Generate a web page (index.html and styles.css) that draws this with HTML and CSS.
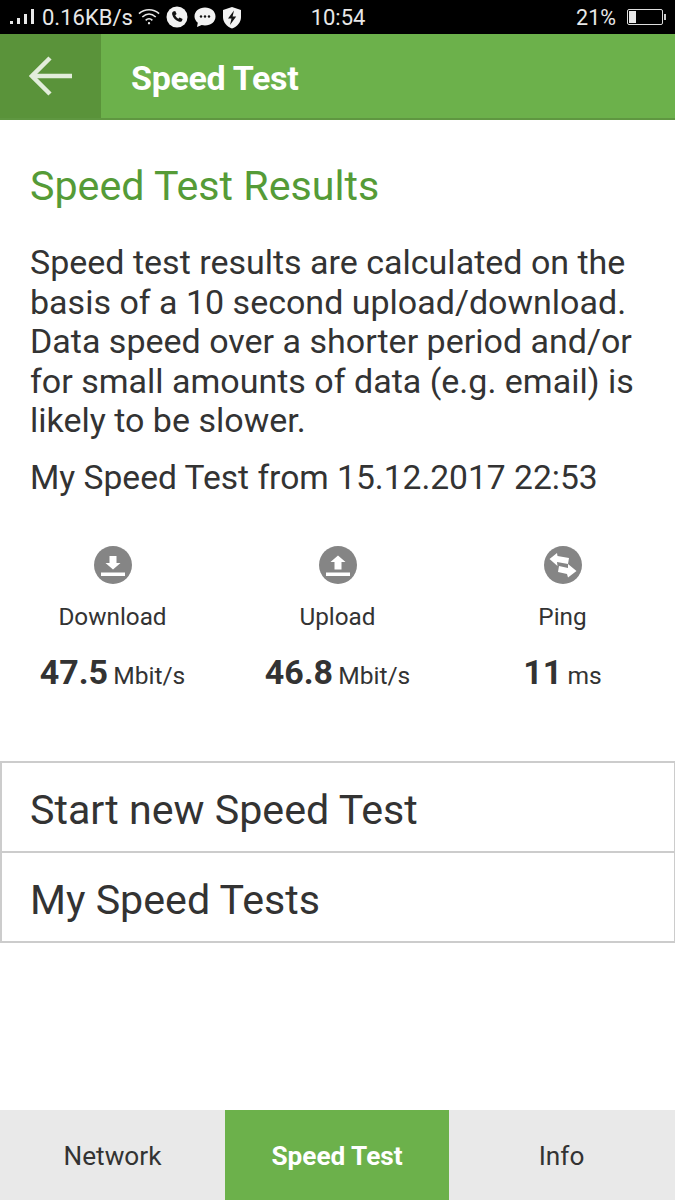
FILE: index.html
```html
<!DOCTYPE html>
<html lang="en">

<head>
    <meta charset="UTF-8">
    <title>Speed Test</title>
    <link rel="stylesheet" href="styles.css">
</head>

<body>
    <div class="page">
        <div class="status">
            <div class="status-left">
                <svg class="signal" width="24" height="16" viewBox="0 0 24 16">
                    <rect x="0" y="12" width="3" height="3" fill="#e8e8e8" />
                    <rect x="7" y="9" width="3" height="6" fill="#e8e8e8" />
                    <rect x="14" y="5" width="3" height="10" fill="#e8e8e8" />
                    <rect x="21" y="0" width="3" height="15" fill="#e8e8e8" />
                </svg>
                <span class="speed">0.16KB/s</span>
                <svg class="wifi" width="23" height="20" viewBox="0 0 24 20" fill="none" stroke="#e8e8e8" stroke-width="1.7">
                    <path d="M1 6.5C7 1 16 1 22 6.5" />
                    <path d="M4.5 10C9 6 14 6 18.5 10" />
                    <path d="M8 13.5C10 11.5 13 11.5 15 13.5" />
                    <circle cx="11.5" cy="16.5" r="1.2" fill="#e8e8e8" stroke="none" />
                </svg>
                <svg class="badge" width="22" height="22" viewBox="0 0 22 22">
                    <circle cx="11" cy="11" r="10.5" fill="#f2f2f2" />
                    <path d="M7.2 5.5l2 -.6 1.4 3.2 -1.4 1.2c.7 1.5 1.7 2.6 3.1 3.4l1.3 -1.3 3 1.6 -.7 2c-.6.8 -1.7 1 -2.700.7 -3.700 -1.100 -6 -3.800 -7 -7.200 -.3 -1.200 .1 -2.400 1 -3z" fill="#111" />
                </svg>
                <svg class="badge" width="24" height="22" viewBox="0 0 24 22">
                    <path d="M12 1.5c6 0 10.500 3.800 10.500 9s-4.500 9 -10.500 9c-1.200 0 -2.300 -.2 -3.300 -.5l-4.700 2 .8 -4.200C2.800 15 1.500 12.900 1.500 10.500c0 -5.200 4.500 -9 10.500 -9z" fill="#f2f2f2" />
                    <circle cx="8" cy="10.500" r="1.200" fill="#111" />
                    <circle cx="12" cy="10.500" r="1.200" fill="#111" />
                    <circle cx="16" cy="10.500" r="1.200" fill="#111" />
                </svg>
                <svg class="badge" width="20" height="23" viewBox="0 0 20 23">
                    <path d="M10 1l9 3v7c0 5.500 -3.800 9.500 -9 11.500C4.800 20.500 1 16.500 1 11V4z" fill="#f2f2f2" />
                    <path d="M12 4.500L6 12.500h3.500L8 19l6.200 -8.500h-3.600z" fill="#111" />
                </svg>
            </div>
            <span class="clock">10:54</span>
            <div class="status-right">
                <span class="percent">21%</span>
                <div class="battery">
                    <div class="battery-fill"></div>
                </div>
                <div class="battery-tip"></div>
            </div>
        </div>

        <div class="header">
            <div class="back">
                <svg width="43" height="42" viewBox="0 0 43 42" fill="none" stroke="#e2eddb" stroke-width="4.500">
                    <path d="M21 3L3 21l18 18" />
                    <path d="M3 21h40" />
                </svg>
            </div>
            <div class="header-title">Speed Test</div>
        </div>

        <div class="content">
            <h1>Speed Test Results</h1>
            <p class="info">Speed test results are calculated on the basis of a 10 second upload/download. Data speed over a shorter period and/or for small amounts of data (e.g. email) is likely to be slower.</p>
            <p class="from">My Speed Test from 15.12.2017 22:53</p>
        </div>

        <div class="stats">
            <div class="stat">
                <svg width="38" height="38" viewBox="0 0 38 38">
                    <circle cx="19" cy="19" r="19" fill="#858585" />
                    <path d="M15.500 10h7v7h4L19 23.500 11.500 17h4z" fill="#fff" />
                    <rect x="7" y="26.500" width="24" height="3.500" fill="#fff" />
                </svg>
                <div class="stat-label">Download</div>
                <div class="stat-value"><b>47.5</b> Mbit/s</div>
            </div>
            <div class="stat">
                <svg width="38" height="38" viewBox="0 0 38 38">
                    <circle cx="19" cy="19" r="19" fill="#858585" />
                    <path d="M19 9.500l7.500 6.500h-4v7.500h-7V16h-4z" fill="#fff" />
                    <rect x="7" y="26.500" width="24" height="3.500" fill="#fff" />
                </svg>
                <div class="stat-label">Upload</div>
                <div class="stat-value"><b>46.8</b> Mbit/s</div>
            </div>
            <div class="stat">
                <svg width="38" height="38" viewBox="0 0 38 38">
                    <circle cx="19" cy="19" r="19" fill="#858585" />
                    <path d="M5.500 13L13 7l.5 3 11.500 2 -1 6 -11 -2 .5 4z" fill="#fff" />
                    <path d="M32.500 25L24 31.500l-1 -3.500 -9 -2 1 -6 9 2 0 -4z" fill="#fff" />
                </svg>
                <div class="stat-label">Ping</div>
                <div class="stat-value"><b>11</b> ms</div>
            </div>
        </div>

        <div class="menu">
            <div class="menu-item">Start new Speed Test</div>
            <div class="menu-item">My Speed Tests</div>
        </div>

        <div class="tabs">
            <div class="tab">Network</div>
            <div class="tab active">Speed Test</div>
            <div class="tab">Info</div>
        </div>
    </div>
</body>

</html>
```

FILE: styles.css
```css
* {
    margin: 0;
    padding: 0;
    box-sizing: border-box;
}

body {
    font-family: Roboto, "Liberation Sans", sans-serif;
    background: #fff;
    color: #333;
}

.page {
    width: 675px;
    height: 1200px;
    display: flex;
    flex-direction: column;
    overflow: hidden;
}

.status {
    height: 34px;
    flex-shrink: 0;
    background: #000;
    color: #e8e8e8;
    display: flex;
    align-items: center;
    justify-content: space-between;
    padding: 0 9px 0 10px;
}

.status-left {
    width: 240px;
    display: flex;
    align-items: center;
    gap: 5px;
}

.signal {
    margin-right: 3px;
}

.speed {
    font-size: 22px;
}

.clock {
    font-size: 22px;
    margin-right: 150px;
}

.status-right {
    display: flex;
    align-items: center;
}

.percent {
    font-size: 21.5px;
    margin-right: 11px;
}

.battery {
    width: 36px;
    height: 16px;
    border: 1px solid #ddd;
    border-radius: 2px;
    padding: 1px;
}

.battery-fill {
    width: 7px;
    height: 100%;
    background: #e8e8e8;
}

.battery-tip {
    width: 2px;
    height: 6px;
    margin-left: 1px;
    background: #ccc;
}

.header {
    height: 86px;
    flex-shrink: 0;
    background: #6cb14b;
    border-bottom: 2px solid #5f9741;
    display: flex;
}

.back {
    width: 101px;
    background: #5a933a;
    display: flex;
    align-items: center;
    justify-content: center;
}

.header-title {
    margin-left: 30px;
    padding-top: 3px;
    align-self: center;
    color: #fff;
    font-size: 34px;
    font-weight: 700;
    letter-spacing: -0.3px;
}

.content {
    padding: 42px 30px 0;
}

h1 {
    color: #559b37;
    font-size: 41.2px;
    font-weight: 400;
    line-height: 48px;
}

.info {
    margin-top: 33px;
    font-size: 34px;
    line-height: 39.5px;
}

.from {
    margin-top: 17px;
    font-size: 33.6px;
    line-height: 39px;
}

.stats {
    margin-top: 49px;
    display: flex;
}

.stat {
    width: 225px;
    display: flex;
    flex-direction: column;
    align-items: center;
}

.stat-label {
    margin-top: 18px;
    font-size: 24.3px;
    line-height: 30px;
}

.stat-value {
    margin-top: 18px;
    font-size: 24.6px;
    line-height: 44px;
    word-spacing: -1px;
}

.stat-value b {
    font-size: 34px;
}

.menu {
    margin-top: 63px;
    border-style: solid;
    border-color: #ccc;
    border-width: 0 1px 2px 2px;
}

.menu-item {
    height: 90px;
    padding-left: 28px;
    border-top: 2px solid #ccc;
    font-size: 41.2px;
    line-height: 94px;
}

.tabs {
    margin-top: auto;
    height: 90px;
    flex-shrink: 0;
    display: flex;
    background: #e9e9e9;
}

.tab {
    width: 225px;
    font-size: 26.2px;
    line-height: 92px;
    text-align: center;
}

.tab.active {
    width: 224px;
    background: #6cb14b;
    color: #fff;
    font-weight: 700;
}
```
